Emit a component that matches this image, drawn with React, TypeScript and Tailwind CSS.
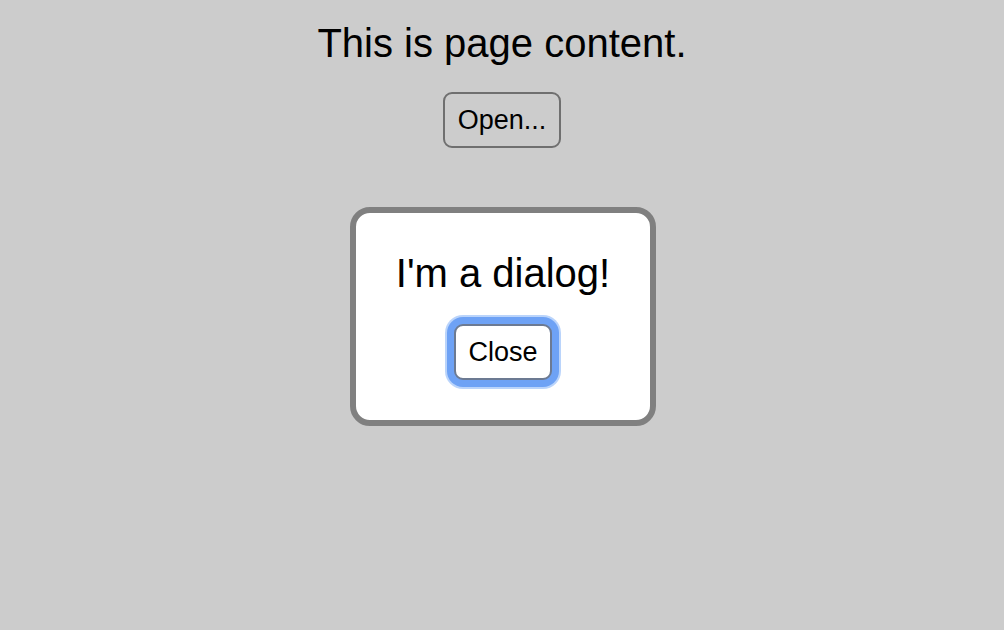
import React, { useState } from 'react';

const font = { fontFamily: '"Liberation Sans", Arial, Helvetica, sans-serif' };

export default function App() {
  const [open, setOpen] = useState(true);

  return (
    <div className="relative h-[630px] w-full overflow-hidden bg-[#cccccc] text-black" style={font}>
      <div className="flex flex-col items-center pt-5">
        <p className="text-[40px] leading-[46px]">This is page content.</p>
        <button
          className="mt-[26px] rounded-[9px] border-2 border-[#6f6f6f] bg-transparent px-[13px] py-[10px] text-[27px] leading-[32px]"
          onClick={() => setOpen(true)}
        >
          Open...
        </button>
      </div>

      {open && (
        <div className="absolute inset-0 flex items-center justify-center pt-[3px] pl-[2px]">
          <div className="flex flex-col items-center rounded-[20px] border-[6px] border-[#808080] bg-white px-10 pt-[37px] pb-10">
            <h2 className="text-[40px] leading-[46px] font-normal">I'm a dialog!</h2>
            <button
              className="mt-7 rounded-[9px] border-2 border-[#6c7a92] bg-white px-3 py-[10px] text-[27px] leading-[32px] shadow-[0_0_0_7px_#6ea2f5,0_0_0_9px_#bad4fb]"
              onClick={() => setOpen(false)}
            >
              Close
            </button>
          </div>
        </div>
      )}
    </div>
  );
}
